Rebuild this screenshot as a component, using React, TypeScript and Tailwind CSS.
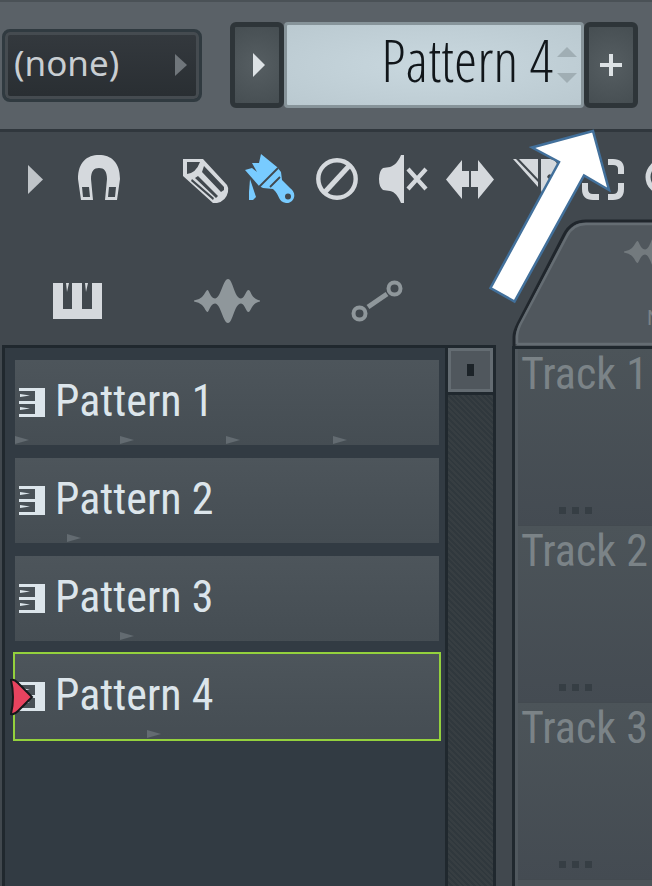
import React from "react";

const labelFont = "font-['Roboto_Condensed','Liberation_Sans_Narrow','Liberation_Sans',sans-serif]";

type IconProps = { children: React.ReactNode };

function Icon({ children }: IconProps) {
  return (
    <svg viewBox="0 0 50 50" className="h-[50px] w-[50px] overflow-visible" fill="currentColor" aria-hidden="true">
      {children}
    </svg>
  );
}

const tools = [
  {
    name: "Draw",
    icon: (
      <Icon>
        <path fillRule="evenodd" d="M2 5H22L46 31Q48 34 47 38Q45 47 36 49H32L2 22ZM6 8V20Q15 19 19 8ZM23 12L21 18L40 38L43 36L43 33ZM17 22L14 24L35 44L37 42ZM11 25L10 27L32 46L33 44Z" />
      </Icon>
    ),
  },
  {
    name: "Paint",
    active: true,
    icon: (
      <Icon>
        <path d="M14 0L30 13L34 18L35 26L43 34C52 41 45 50 39 49C31 48 33 41 26 35L16 34L12 32L-2 16L5 14L10 18L5 9L12 9Z" />
        <path d="M3 25L9 43L6 46H2V38Z" />
        <path d="M12 33L31 14M23 33L33 23" className="stroke-[#41484e]" strokeWidth="1.8" />
        <circle cx="41" cy="42.5" r="3" className="fill-[#41484e]" />
      </Icon>
    ),
  },
  {
    name: "Delete",
    icon: (
      <Icon>
        <circle cx="24" cy="25" r="18.7" fill="none" stroke="currentColor" strokeWidth="4.4" />
        <path d="M12 38L36 12" stroke="currentColor" strokeWidth="5" />
      </Icon>
    ),
  },
  {
    name: "Mute",
    icon: (
      <Icon>
        <path d="M25 1V49H22C19 42 16 38 11 37L4 36Q0 33 0 25Q0 17 4 14L11 13C16 11 19 8 22 1Z" />
        <path d="M29 15L47 35M47 15L29 35" stroke="currentColor" strokeWidth="4.2" />
      </Icon>
    ),
  },
  {
    name: "Slip",
    icon: (
      <Icon>
        <path d="M1 25.500L17 6V17H24V33H17V45ZM49 25.500L33 6V17H26V33H33V45Z" />
      </Icon>
    ),
  },
  {
    name: "Slice",
    icon: (
      <Icon>
        <path d="M2 5H5L27 28V33ZM8 5H27V25ZM30 5H39Q47 6 47 15V24H43Q38 17 36 23L39 26L32 42L30 36Z" />
      </Icon>
    ),
  },
  {
    name: "Select",
    icon: (
      <Icon>
        <path
          d="M22 8H16Q8 8 8 15V20M31 8H36Q44 8 44 15V20M8 29V35Q8 43 16 43H22M31 43H36Q44 43 44 35V29"
          fill="none"
          stroke="currentColor"
          strokeWidth="6"
        />
      </Icon>
    ),
  },
  {
    name: "Zoom",
    icon: (
      <Icon>
        <circle cx="20" cy="23" r="15" fill="none" stroke="currentColor" strokeWidth="5" />
        <path d="M30 34L44 48" stroke="currentColor" strokeWidth="7" />
      </Icon>
    ),
  },
];

const patterns = [
  { name: "Pattern 1", notes: [0, 105, 211, 318] },
  { name: "Pattern 2", notes: [52] },
  { name: "Pattern 3", notes: [105] },
  { name: "Pattern 4", notes: [132], selected: true },
];

const tracks = ["Track 1", "Track 2", "Track 3"];

function Wave() {
  return (
    <svg viewBox="0 0 66 44" className="h-[44px] w-[66px]" fill="currentColor" aria-hidden="true">
      <path d="M0 21.500Q5 21 8 18C11 15 12 11 13.500 11C15 11 16 19 21 19.500C27 19 29 0 34 0C39 0 40 19 47 19.500C51 19 52 11 54.500 11C57 11 57 20 66 21.500V22.500C57 24 57 33 54.500 33C52 33 51 25 47 24.500C40 25 39 44 34 44C29 44 27 25 21 24.500C16 25 15 33 13.500 33C12 33 11 29 8 26Q5 23 0 22.500Z" />
    </svg>
  );
}

function Header() {
  const key =
    "flex w-[54px] shrink-0 items-center justify-center rounded-md border-[5px] border-[#2e3539] bg-[radial-gradient(circle,#565e62,#464e52)] text-[#dde2e5]";
  return (
    <header className="flex items-center border-t-2 border-b-[3px] border-t-[#4a5156] border-b-[#30373d] bg-[#5a6167] pt-5 pr-[14px] pb-[21px] pl-[2px]">
      <div className="relative w-[200px] shrink-0">
        <select
          aria-label="Pattern group"
          className="h-[73px] w-full appearance-none rounded-lg border-[3px] border-[#303a40] bg-linear-to-b from-[#34393e] to-[#292e32] pb-1 pl-[9px] font-['Noto_Sans','Open_Sans',sans-serif] text-[35px] text-[#c9ced2] shadow-[inset_0_0_0_3px_#454b50]"
        >
          <option>(none)</option>
        </select>
        <svg viewBox="0 0 12 22" className="pointer-events-none absolute top-[25px] right-[15px] h-[22px] w-3 fill-[#70767b]" aria-hidden="true">
          <path d="M0 0L12 11L0 22Z" />
        </svg>
      </div>
      <div className="ml-7 flex h-[86px] min-w-0 flex-1">
        <button aria-label="Pattern menu" className={key}>
          <svg viewBox="0 0 12 24" className="ml-1 h-6 w-3" fill="currentColor">
            <path d="M0 0L12 12L0 24Z" />
          </svg>
        </button>
        <div className="flex min-w-0 flex-1 items-center rounded-sm border-[3px] border-[#87949a] bg-[radial-gradient(ellipse,#c9d8df,#bac9d0)] pr-1">
          <input
            aria-label="Pattern name"
            defaultValue="Pattern 4"
            className="h-20 w-0 min-w-0 flex-1 bg-transparent pb-3 text-right font-['Open_Sans_Condensed_Light','OpenSans-CondensedLight','Roboto_Condensed','Liberation_Sans_Narrow',sans-serif] text-[59px] leading-[68px] font-light text-[#11161a]"
          />
          <div className="ml-1 flex w-5 flex-col gap-4 text-[#a0aeb4]">
            <button aria-label="Next pattern">
              <svg viewBox="0 0 20 10" className="h-[10px] w-5" fill="currentColor">
                <path d="M0 10L10 0L20 10Z" />
              </svg>
            </button>
            <button aria-label="Previous pattern">
              <svg viewBox="0 0 20 10" className="h-[10px] w-5" fill="currentColor">
                <path d="M0 0L10 10L20 0Z" />
              </svg>
            </button>
          </div>
        </div>
        <button aria-label="Add pattern" className={key}>
          <svg viewBox="0 0 24 24" className="h-6 w-6" stroke="currentColor" strokeWidth="4">
            <path d="M12 1V23M1 12H23" />
          </svg>
        </button>
      </div>
    </header>
  );
}

function Toolbar() {
  return (
    <div className="flex gap-4 overflow-hidden pt-[22px] pb-[15px] pl-[9px] text-[#d5d9dd]">
      <button aria-label="Menu" className="shrink-0">
        <Icon>
          <path d="M19 11L34 25.500L19 40Z" className="fill-[#bfc4c8]" />
        </Icon>
      </button>
      <button aria-label="Snap" className="shrink-0">
        <Icon>
          <path
            fillRule="evenodd"
            d="M6 46L3 25C3 8 12 1 24 1S45 8 45 25L42 46H30L32 25C32 17 29 14 24 14S16 17 16 25L18 46ZM7 33L8 43H15L14 33ZM34 33L33 43H40L41 33Z"
          />
        </Icon>
      </button>
      <div className="ml-10 flex gap-4">
        {tools.map((t) => (
          <button key={t.name} aria-label={t.name} className={t.active ? "shrink-0 text-[#78cbff]" : "shrink-0"}>
            {t.icon}
          </button>
        ))}
      </div>
    </div>
  );
}

function PickerTabs() {
  return (
    <div className="grid h-[126px] grid-cols-3 pt-[38px] pr-11 pl-[2px] text-[#8f979b]">
      <button aria-label="Patterns" className="flex items-center justify-center text-[#d5d9dd]">
        <svg viewBox="0 0 49 36" className="h-9 w-[49px]" fill="currentColor">
          <path d="M0 0H10V26H19V0H29V26H39V0H49V36H0ZM13 0H16L14 9ZM32 0H35L33 9Z" />
        </svg>
      </button>
      <button aria-label="Audio clips" className="flex items-center justify-center">
        <Wave />
      </button>
      <button aria-label="Automation clips" className="flex items-center justify-center">
        <svg viewBox="0 0 52 44" className="h-11 w-[52px]" fill="none" stroke="currentColor" strokeWidth="4">
          <circle cx="8.500" cy="34.500" r="6" />
          <circle cx="43.500" cy="9.500" r="6" />
          <path d="M17 28L36 15" strokeWidth="5" />
        </svg>
      </button>
    </div>
  );
}

function PatternItem({ name, notes, selected }: { name: string; notes: number[]; selected?: boolean }) {
  return (
    <li className="relative">
      <button
        className={
          "relative flex h-[85px] w-full items-center overflow-hidden bg-linear-to-b from-[#4d555b] to-[#454d53] pl-1 text-left text-[#dce5eb] " +
          (selected ? "outline-2 outline-[#94d13d]" : "")
        }
      >
        <svg viewBox="0 0 26 29" className="h-[29px] w-[26px] shrink-0" fill="currentColor" aria-hidden="true">
          <path d="M0 0H26V29H0V26H16V16H0V13H16V3H0ZM1 6L11 7.500L1 9ZM1 19L11 20.500L1 22Z" />
        </svg>
        <span className={"ml-[10px] pb-1 text-[44px] leading-[48px] " + labelFont}>{name}</span>
        {notes.map((x) => (
          <svg key={x} viewBox="0 0 14 8" className="absolute bottom-px h-2 w-[14px] fill-[#636b71]" style={{ left: x }} aria-hidden="true">
            <path d="M0 0L14 4L0 8Z" />
          </svg>
        ))}
      </button>
      {selected && (
        <svg viewBox="0 0 24 38" className="absolute top-6 -left-[5px] h-[38px] w-6" aria-hidden="true">
          <path d="M1 2Q5 19 1 36Q4 37 8 33L22 19L8 5Q4 1 1 2Z" className="fill-[#e8435f] stroke-[#14181b]" strokeWidth="2" />
        </svg>
      )}
    </li>
  );
}

function Picker() {
  return (
    <section className="ml-[2px] flex min-h-0 flex-1 border-3 border-b-0 border-[#20282e] bg-[#323b43]">
      <ul className="flex min-w-0 flex-1 flex-col gap-[13px] pt-3 pr-[6px] pl-[10px]">
        {patterns.map((p) => (
          <PatternItem key={p.name} {...p} />
        ))}
      </ul>
      <div className="flex w-12 flex-col border-l-3 border-[#20282e] bg-[repeating-linear-gradient(45deg,#373e42_0px,#373e42_2px,#30383d_2px,#30383d_4px)]">
        <button
          aria-label="Scroll"
          className="flex h-[44px] items-center justify-center border-3 border-[#646c72] bg-[#50575d] shadow-[0_3px_0_#20282e]"
        >
          <span className="h-3 w-[7px] bg-[#1c2328]" />
        </button>
      </div>
    </section>
  );
}

function Playlist() {
  return (
    <section className="flex min-w-0 flex-1 flex-col overflow-hidden">
      <div className="relative h-[130px] shrink-0 overflow-hidden border-b-3 border-[#20282e]">
        <svg viewBox="0 0 140 127" className="absolute top-0 left-0 h-[127px] w-[140px]" aria-hidden="true">
          <path d="M2 131V118Q2 113 6 105L52 16Q59 2 74 2H145V131Z" className="fill-[#50575d] stroke-[#20262c]" strokeWidth="3" />
          <path d="M5 125V118Q5 113 8 106L55 17Q61 5 74 5H145M5 125H145" className="fill-none stroke-[#656d73]" strokeWidth="2.500" />
        </svg>
        <div className="absolute top-[11px] left-[112px] text-[#737a7e]">
          <Wave />
        </div>
        <span className="absolute top-[85px] left-[135px] font-['Roboto',sans-serif] text-xl text-[#7b8286]">N</span>
      </div>
      <ol className="min-h-0 flex-1 border-l-3 border-[#20282e]">
        {tracks.map((t) => (
          <li
            key={t}
            className="flex h-[177px] flex-col justify-between border-l-3 border-[#50585e] bg-linear-to-b from-[#4c5459] to-[#444b52] pb-3 shadow-[inset_0_-1px_0_#434a50]"
          >
            <span className={"pl-[3px] text-[44px] leading-[50px] whitespace-nowrap text-[#7b8387] " + labelFont}>{t}</span>
            <button aria-label={t + " options"} className="flex gap-[6px] pl-[41px]">
              <i className="h-[7px] w-[7px] bg-[#363e44]" />
              <i className="h-[7px] w-[7px] bg-[#363e44]" />
              <i className="h-[7px] w-[7px] bg-[#363e44]" />
            </button>
          </li>
        ))}
        <li className="h-[177px] border-l-3 border-[#50585e] bg-[#4c5459]" />
      </ol>
    </section>
  );
}

export default function App() {
  return (
    <main className="relative flex h-screen w-full flex-col overflow-hidden bg-[#41484e]">
      <Header />
      <Toolbar />
      <div className="flex min-h-0 flex-1">
        <div className="flex w-[496px] shrink-0 flex-col">
          <PickerTabs />
          <Picker />
        </div>
        <div className="w-4 shrink-0" />
        <Playlist />
      </div>
      <svg viewBox="0 0 126 178" className="pointer-events-none absolute top-[127px] left-[487px] h-[178px] w-[126px]" aria-hidden="true">
        <path d="M106 4L45 20.500L72 35L3.500 161L27.500 174.500L97 48.500L122 63Z" className="fill-white stroke-[#42709b]" strokeWidth="2.500" />
      </svg>
    </main>
  );
}
